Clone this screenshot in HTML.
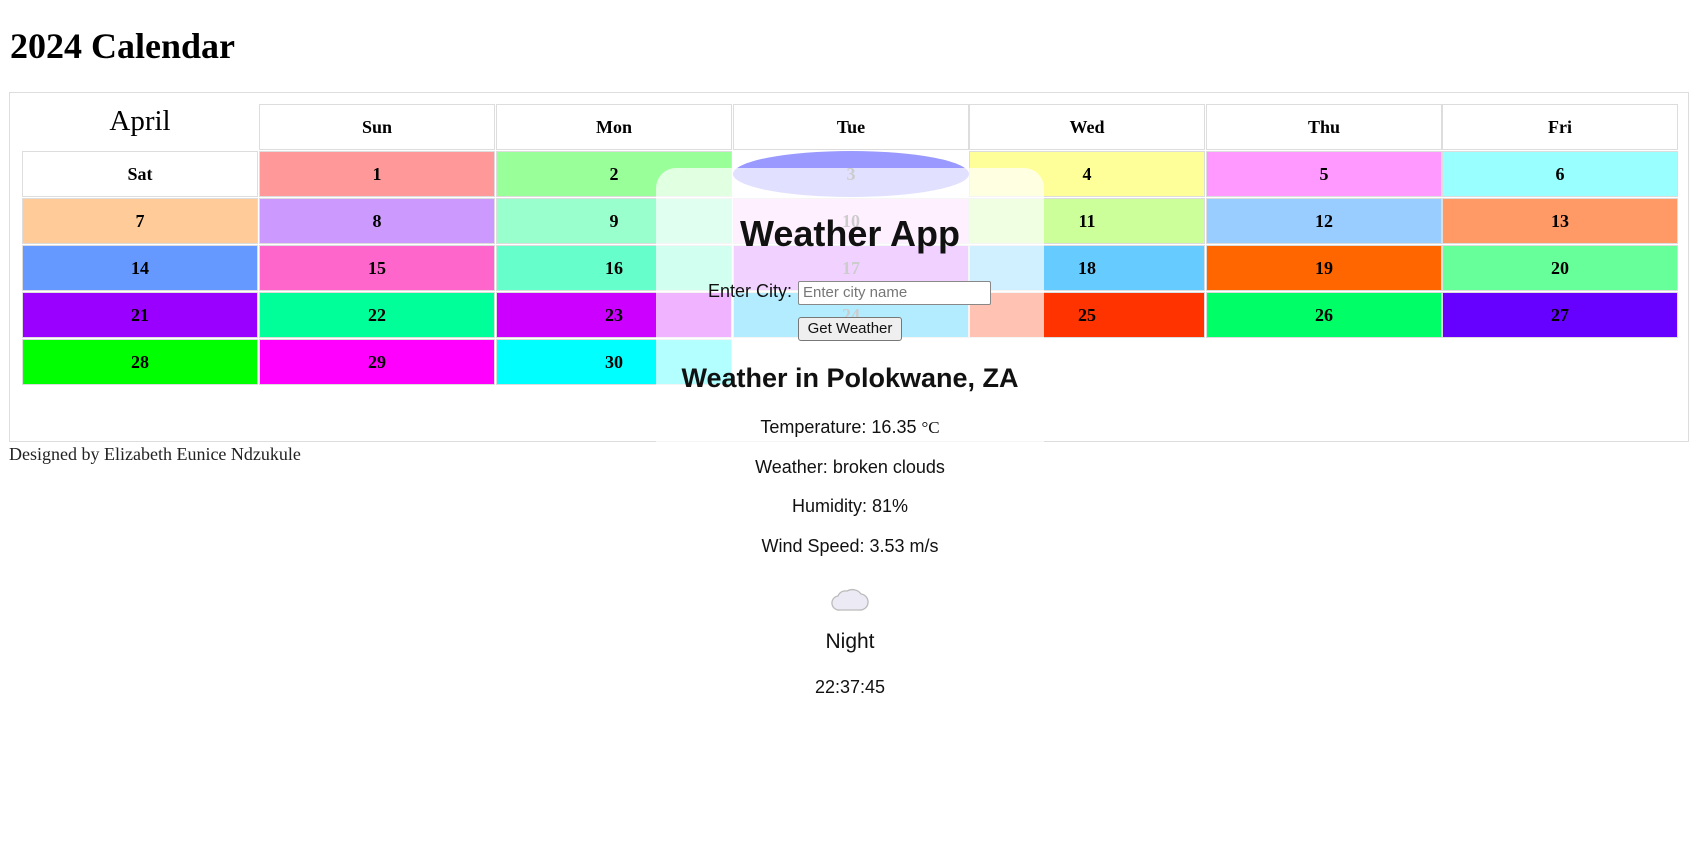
<!DOCTYPE html>
<html><head><meta charset="utf-8"><style>
body{margin:0;width:1700px;height:866px;background:#fff;position:relative;overflow:hidden;font-family:"Liberation Serif",serif;}
.h1{position:absolute;left:10px;top:25px;font-size:36px;font-weight:bold;margin:0;}
.outer{position:absolute;left:9px;top:92px;width:1680px;height:350px;border:1px solid #ddd;box-sizing:border-box;}
.c{position:absolute;width:236px;height:46px;box-sizing:border-box;border:1px solid #ddd;display:flex;align-items:center;justify-content:center;font-weight:bold;font-size:18px;}
.april{position:absolute;left:22px;top:105px;width:236px;height:40px;text-align:center;font-size:29px;}
.foot{position:absolute;left:9px;top:444px;font-size:18px;color:#222;}
.wbox{position:absolute;left:656px;top:168px;width:388px;height:560px;background:rgba(255,255,255,0.7);border-radius:20px;}
.w{position:absolute;left:600px;width:500px;text-align:center;font-family:"Liberation Sans",sans-serif;color:#111;}
</style></head><body>
<div class="h1">2024 Calendar</div>
<div class="outer"></div>
<div class="april">April</div>
<div class="c" style="left:259px;top:104px">Sun</div>
<div class="c" style="left:496px;top:104px">Mon</div>
<div class="c" style="left:733px;top:104px">Tue</div>
<div class="c" style="left:969px;top:104px">Wed</div>
<div class="c" style="left:1206px;top:104px">Thu</div>
<div class="c" style="left:1442px;top:104px">Fri</div>

<div class="c" style="left:22px;top:151px">Sat</div>
<div class="c" style="left:259px;top:151px;background:#ff9999">1</div>
<div class="c" style="left:496px;top:151px;background:#99ff99">2</div>
<div class="c" style="left:733px;top:151px;background:#9999ff;border-radius:50%;border:none;color:#555">3</div>
<div class="c" style="left:969px;top:151px;background:#ffff99">4</div>
<div class="c" style="left:1206px;top:151px;background:#ff99ff">5</div>
<div class="c" style="left:1442px;top:151px;background:#99ffff">6</div>

<div class="c" style="left:22px;top:198px;background:#ffcc99">7</div>
<div class="c" style="left:259px;top:198px;background:#cc99ff">8</div>
<div class="c" style="left:496px;top:198px;background:#99ffcc">9</div>
<div class="c" style="left:733px;top:198px;background:#ffccff;color:#555">10</div>
<div class="c" style="left:969px;top:198px;background:#ccff99">11</div>
<div class="c" style="left:1206px;top:198px;background:#99ccff">12</div>
<div class="c" style="left:1442px;top:198px;background:#ff9966">13</div>

<div class="c" style="left:22px;top:245px;background:#6699ff">14</div>
<div class="c" style="left:259px;top:245px;background:#ff66cc">15</div>
<div class="c" style="left:496px;top:245px;background:#66ffcc">16</div>
<div class="c" style="left:733px;top:245px;background:#cc66ff;color:#555">17</div>
<div class="c" style="left:969px;top:245px;background:#66ccff">18</div>
<div class="c" style="left:1206px;top:245px;background:#ff6600">19</div>
<div class="c" style="left:1442px;top:245px;background:#66ff99">20</div>

<div class="c" style="left:22px;top:292px;background:#9900ff">21</div>
<div class="c" style="left:259px;top:292px;background:#00ff99">22</div>
<div class="c" style="left:496px;top:292px;background:#cc00ff">23</div>
<div class="c" style="left:733px;top:292px;background:#00bfff;color:#555">24</div>
<div class="c" style="left:969px;top:292px;background:#ff3300">25</div>
<div class="c" style="left:1206px;top:292px;background:#00ff66">26</div>
<div class="c" style="left:1442px;top:292px;background:#6600ff">27</div>

<div class="c" style="left:22px;top:339px;background:#00ff00">28</div>
<div class="c" style="left:259px;top:339px;background:#ff00ff">29</div>
<div class="c" style="left:496px;top:339px;background:#00ffff">30</div>

<div class="foot">Designed by Elizabeth Eunice Ndzukule</div>

<div class="wbox"></div>
<div class="w" style="top:213px;font-size:36px;font-weight:bold;">Weather App</div>
<div class="w" style="top:280px;font-size:18px;height:26px;">
  <span style="position:absolute;left:108px;top:1px;">Enter City:</span>
  <span style="position:absolute;left:198px;top:1px;width:193px;height:24px;border:1px solid #888;border-radius:2px;box-sizing:border-box;background:#fff;text-align:left;font-size:15px;color:#777;padding-left:4px;line-height:22px;">Enter city name</span>
</div>
<div class="w" style="top:317px;height:24px;">
  <span style="position:absolute;left:198px;width:104px;height:24px;border:1px solid #777;border-radius:3px;box-sizing:border-box;background:#efefef;font-size:15px;line-height:22px;">Get Weather</span>
</div>
<div class="w" style="top:363px;font-size:27px;font-weight:bold;">Weather in Polokwane, ZA</div>
<div class="w" style="top:417px;font-size:18px;">Temperature: 16.35 <span style="font-family:'Liberation Serif',serif;font-size:17px">°C</span></div>
<div class="w" style="top:457px;font-size:18px;">Weather: broken clouds</div>
<div class="w" style="top:496px;font-size:18px;">Humidity: 81%</div>
<div class="w" style="top:536px;font-size:18px;">Wind Speed: 3.53 m/s</div>
<svg style="position:absolute;left:830px;top:585px" width="40" height="30" viewBox="0 0 40 30">
<path d="M10 25 H29 A8 8 0 0 0 31 9 A10 9 0 0 0 17 6 A8 8 0 0 0 8 11 A7 7 0 0 0 10 25 Z" fill="#ecebf5" stroke="#bbb" stroke-width="1.3"/>
</svg>
<div class="w" style="top:630px;font-size:21px;">Night</div>
<div class="w" style="top:677px;font-size:18px;">22:37:45</div>
</body></html>
